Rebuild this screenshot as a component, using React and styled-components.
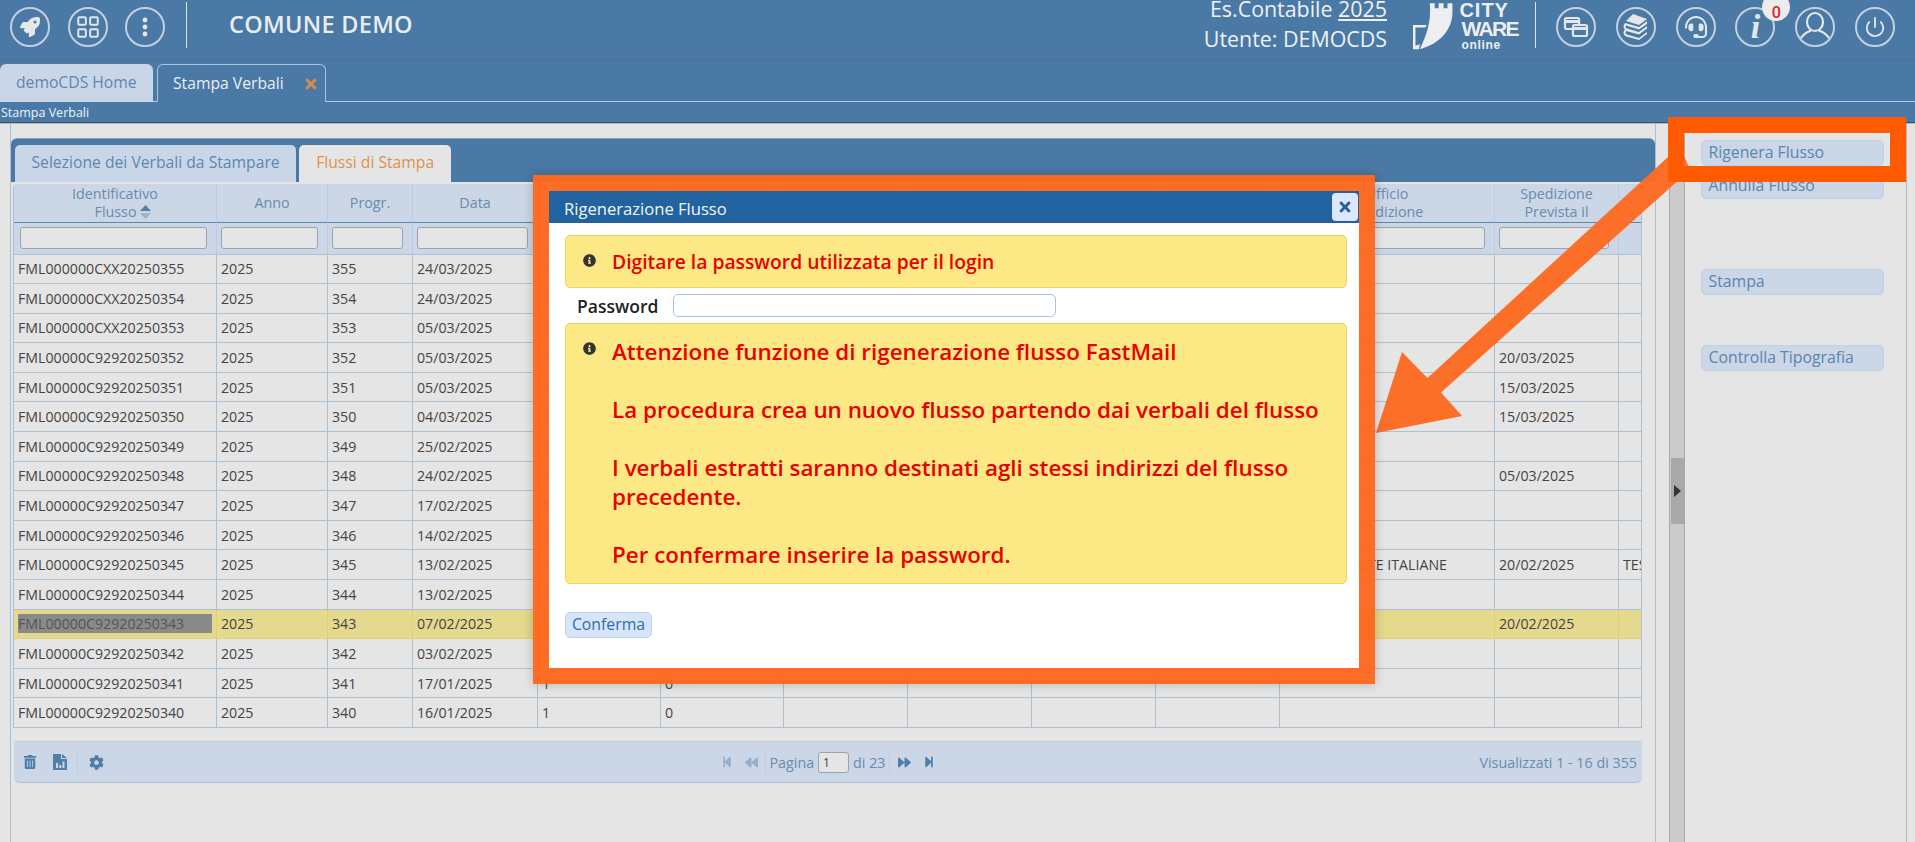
import React from "react";
import styled, { createGlobalStyle } from "styled-components";
import { FaRocket, FaHeadset, FaTrashAlt, FaCog, FaTimes, FaInfoCircle, FaStepBackward, FaBackward, FaForward, FaStepForward } from "react-icons/fa";
import { LayoutGrid, Power } from "lucide-react";

const Blue = "#4a79a5";

const GlobalStyle = createGlobalStyle`
  html, body { margin: 0; padding: 0; height: 100%; overflow: hidden; background: #e5e5e5; }
  body { font-family: "Open Sans", "Liberation Sans", sans-serif; }
  * { box-sizing: border-box; }
`;

const Page = styled.div`
  position: relative;
  width: 1915px;
  height: 842px;
  overflow: hidden;
  display: flex;
  flex-direction: column;
`;

/* top bar */
const Header = styled.div`
  height: 60px;
  background: ${Blue};
  border-bottom: 1px solid #44719b;
  display: flex;
  align-items: flex-start;
  justify-content: space-between;
  padding: 7px 20px 0 10px;
`;
const Group = styled.div`
  display: flex;
  align-items: flex-start;
`;
const Circles = styled.div`
  display: flex;
  gap: ${(p) => p.$gap}px;
  margin-left: ${(p) => p.$left || 0}px;
`;
const Circle = styled.div`
  position: relative;
  width: 40px;
  height: 40px;
  border-radius: 50%;
  border: 2px solid #c3d1de;
  color: #e4e8ec;
  display: flex;
  align-items: center;
  justify-content: center;
  overflow: ${(p) => (p.$clip ? "hidden" : "visible")};
`;
const Divider = styled.div`
  width: 1px;
  height: 46px;
  margin: -5px 0 0 ${(p) => p.$left}px;
  background: #e0e6ec;
`;
const Title = styled.div`
  margin: -1px 0 0 42px;
  font-size: 23.5px;
  line-height: 36px;
  font-weight: 600;
  letter-spacing: 0.3px;
  color: #e9edf0;
`;
const UserInfo = styled.div`
  margin-top: -7px;
  display: flex;
  flex-direction: column;
  gap: 12px;
  text-align: right;
  font-size: 21.4px;
  line-height: 18px;
  font-weight: 500;
  color: #eef1f4;
  u { text-underline-offset: 2px; }
`;
const Logo = styled.div`
  display: flex;
  margin: -5px 0 0 26px;
  width: 105px;
  color: #eceef0;
`;
const LogoWords = styled.div`
  margin-left: 5px;
  font-family: "Liberation Sans", sans-serif;
  font-weight: 700;
  text-align: left;
`;
const LogoCity = styled.div`
  font-size: 20px;
  line-height: 17px;
  letter-spacing: 1px;
`;
const LogoWare = styled.div`
  margin-left: 2px;
  font-size: 21px;
  line-height: 20px;
  letter-spacing: -1.6px;
`;
const LogoOnline = styled.div`
  margin-left: 2px;
  font-size: 12px;
  line-height: 12px;
  letter-spacing: 0.7px;
`;
const InfoGlyph = styled.span`
  font-family: "Liberation Serif", serif;
  font-style: italic;
  font-weight: 700;
  font-size: 34px;
  line-height: 34px;
`;
const Badge = styled.span`
  position: absolute;
  top: -16px;
  left: 25px;
  width: 28px;
  height: 28px;
  padding-top: 9px;
  border-radius: 50%;
  background: #ececec;
  color: #e0202a;
  font-size: 16px;
  font-weight: 600;
  display: flex;
  align-items: center;
  justify-content: center;
`;

/* application tabs */
const TabBar = styled.div`
  height: 42px;
  padding-top: 4px;
  background: ${Blue};
  border-bottom: 1px solid #b5cbdf;
  display: flex;
  gap: 4px;
`;
const AppTab = styled.div`
  height: 38px;
  width: ${(p) => p.$width}px;
  padding-left: ${(p) => p.$pad}px;
  border-radius: 6px 6px 0 0;
  font-size: 15.7px;
  line-height: 36px;
  display: flex;
  align-items: flex-start;
  background: ${(p) => (p.$active ? Blue : "#c9d6e8")};
  color: ${(p) => (p.$active ? "#e9eff5" : "#5d87ae")};
  border: ${(p) => (p.$active ? "1px solid #a9c7e0" : "none")};
  border-bottom: ${(p) => (p.$active ? `1px solid ${Blue}` : "none")};
`;
const TabClose = styled.span`
  margin: 2px 0 0 19px;
  color: #db8a4a;
  display: flex;
  height: 34px;
  align-items: center;
`;
const Crumb = styled.div`
  height: 21px;
  padding-left: 1px;
  background: ${Blue};
  border-bottom: 1px solid #33536f;
  box-shadow: 0 1px 0 #b9b9b9;
  color: #eef3f7;
  font-size: 12.5px;
  line-height: 21px;
`;

/* work area */
const Main = styled.div`
  flex: 1;
  display: flex;
  padding-left: 10px;
  min-height: 0;
`;
const LeftPanel = styled.div`
  width: 1646px;
  border-left: 1px solid #a9bed2;
  border-right: 1px solid #a9bed2;
  padding-top: 15px;
`;
const PanelTabs = styled.div`
  height: 44px;
  width: 1644px;
  padding: 6px 0 0 4px;
  background: ${Blue};
  border-top: 1px solid #7ca5c9;
  border-radius: 6px 6px 0 0;
  display: flex;
  gap: 3px;
`;
const PanelTab = styled.div`
  height: 37px;
  padding: 0 ${(p) => p.$pad}px;
  border-radius: 5px 5px 0 0;
  font-size: 15.7px;
  line-height: 35px;
  background: ${(p) => (p.$active ? "#e5e5e5" : "#c9d6e8")};
  color: ${(p) => (p.$active ? "#d9924e" : "#5d87ae")};
`;
const TableWrap = styled.div`
  margin: 2px 0 0 2px;
  width: 1629px;
  overflow: hidden;
  border-right: 1px solid #adc0d2;
  border-left: 1px solid #adc0d2;
  border-radius: 4px 0 0 0;
`;
const Table = styled.table`
  table-layout: fixed;
  width: 1729px;
  border-collapse: separate;
  border-spacing: 0;
`;
const Col = styled.col`
  width: ${(p) => p.$w}px;
`;
const HeadCell = styled.th`
  height: 39px;
  padding: 0 2px;
  background: #cbd6e7;
  border-right: 1px solid #bccde0;
  border-bottom: 1px solid #5d86ab;
  color: #6a8bab;
  font-size: 14.3px;
  line-height: 18px;
  font-weight: 400;
  text-align: center;
`;
const SortIcon = styled.svg`
  width: 11px;
  height: 14px;
  margin: 0 -16px 0 4px;
  vertical-align: -2px;
`;
const FilterCell = styled.td`
  height: 31.5px;
  padding: 0 9px 0 4px;
  background: #cbd6e7;
  border-right: 1px solid #bccde0;
  border-bottom: 1px solid #aec2d6;
  &:first-child { padding-left: 6px; }
`;
const FilterInput = styled.input`
  display: block;
  width: 100%;
  height: 22px;
  padding: 0 2px;
  background: #e5e5e5;
  border: 1px solid #98a4b0;
  border-radius: 3px;
`;
const Cell = styled.td`
  height: 29.6px;
  padding: 0 ${(p) => (p.$office ? 47 : 4)}px 0 4px;
  text-align: ${(p) => (p.$office ? "right" : "left")};
  background: ${(p) => (p.$selected ? "#e5d98e" : "#e5e5e5")};
  border-right: 1px solid ${(p) => (p.$selected ? "#e2d071" : "#adc0d2")};
  border-bottom: 1px solid ${(p) => (p.$selected ? "#e2d071" : "#adc0d2")};
  color: #444;
  font-size: 14.2px;
  line-height: 19px;
  white-space: nowrap;
  overflow: hidden;
`;
const Picked = styled.span`
  display: block;
  height: 19px;
  line-height: 19px;
  background: #8a8a8a;
  color: #555;
`;
const Pager = styled.div`
  position: relative;
  margin: 13px 0 0 3px;
  width: 1628px;
  height: 42px;
  background: #cbd6e7;
  border-top: 1px solid #c2cede;
  border-bottom: 1px solid #aec0d2;
  border-radius: 0 0 6px 6px;
  color: #5d87ae;
  display: grid;
  grid-template-columns: 1fr auto 1fr;
  align-items: center;
  font-size: 14.3px;
`;
const PagerLeft = styled.div`
  display: flex;
  align-items: center;
  padding-left: 9px;
`;
const PagerMid = styled.div`
  display: flex;
  align-items: center;
  color: #6a8bab;
`;
const PagerRight = styled.div`
  text-align: right;
  padding-right: 5px;
  color: #6a8bab;
`;
const ToolIcon = styled.span`
  display: flex;
  margin-right: ${(p) => p.$right || 0}px;
  color: ${(p) => (p.$off ? "#94afc9" : "#4f7ea8")};
`;
const ToolSep = styled.span`
  width: 1px;
  height: 24px;
  background: #bfcddf;
  margin: 0 ${(p) => p.$right}px 0 ${(p) => p.$left}px;
`;
const PageInput = styled.div`
  width: 31px;
  height: 21px;
  margin: 0 4px;
  padding-left: 4px;
  background: #e5e5e5;
  border: 1px solid #98a4b0;
  border-radius: 3px;
  color: #444;
  font-size: 12px;
  line-height: 20px;
`;
const Splitter = styled.div`
  width: 16px;
  margin-left: 13px;
  background: #cbcbcb;
  border-left: 1px solid #aaa;
  border-right: 1px solid #aaa;
  padding-top: 335px;
`;
const SplitHandle = styled.div`
  margin-left: 1px;
  width: 13px;
  height: 66px;
  background: #a9a9a9;
  display: flex;
  align-items: center;
  justify-content: center;
`;
const SplitArrow = styled.span`
  margin-top: -1px;
  border-left: 7px solid #333;
  border-top: 6px solid transparent;
  border-bottom: 6px solid transparent;
`;
const EastPanel = styled.div`
  width: 222px;
  padding: 17px 0 0 16px;
  border-right: 1px solid #b5b5b5;
`;
const SideButton = styled.div`
  width: 183px;
  height: 26px;
  margin-top: ${(p) => p.$top}px;
  padding-left: 6.5px;
  background: #cbd6e7;
  border: 1px solid #c2d0e2;
  border-radius: 5px;
  color: #5a85ac;
  font-size: 15.8px;
  line-height: 23px;
`;

/* dialog and the orange marks drawn on top of the screenshot */
const Modal = styled.div`
  position: absolute;
  left: 549px;
  top: 191px;
  width: 810px;
  height: 477px;
  background: #fff;
  display: flex;
  flex-direction: column;
`;
const ModalTitle = styled.div`
  height: 32px;
  padding-left: 15px;
  background: #22629f;
  color: #f2f6fa;
  font-size: 16.6px;
  font-weight: 500;
  line-height: 36px;
`;
const CloseButton = styled.div`
  position: absolute;
  right: 1px;
  top: 2px;
  width: 26px;
  height: 28px;
  border-radius: 4px;
  background: #dbe8fb;
  color: #2b6296;
  display: flex;
  align-items: center;
  justify-content: center;
`;
const ModalBody = styled.div`
  padding: 12px 12px 0 16px;
`;
const Alert = styled.div`
  display: flex;
  gap: 16px;
  padding: ${(p) => (p.$big ? "13px 14px 14px 17px" : "1px 14px 0 17px")};
  min-height: 53px;
  align-items: ${(p) => (p.$big ? "flex-start" : "center")};
  background: #fce985;
  border: 1px solid #ecd760;
  border-radius: 5px;
  color: #e80000;
  font-weight: 600;
  font-size: ${(p) => (p.$big ? 22.4 : 19.3)}px;
  line-height: ${(p) => (p.$big ? "29px" : "22px")};
`;
const AlertIcon = styled.span`
  flex: none;
  display: flex;
  color: #333;
  margin-top: ${(p) => (p.$big ? 5 : -3)}px;
`;
const PasswordRow = styled.div`
  display: flex;
  align-items: center;
  height: 23px;
  margin: 6px 0;
  padding-left: 12px;
`;
const PasswordLabel = styled.label`
  width: 96px;
  color: #222;
  font-size: 17.5px;
  font-weight: 600;
`;
const PasswordInput = styled.input`
  width: 383px;
  height: 23px;
  background: #fff;
  border: 1px solid #a9c3d9;
  border-radius: 5px;
`;
const Confirm = styled.div`
  display: inline-block;
  margin-top: 28px;
  width: 87px;
  height: 26px;
  text-align: center;
  background: #d7e5fb;
  border: 1px solid #bfd4ee;
  border-radius: 5px;
  color: #2f6ea6;
  font-size: 15.8px;
  line-height: 23px;
`;
const Frame = styled.div`
  position: absolute;
  left: ${(p) => p.$x}px;
  top: ${(p) => p.$y}px;
  width: ${(p) => p.$w}px;
  height: ${(p) => p.$h}px;
  border: ${(p) => p.$t}px solid ${(p) => p.$c};
  box-shadow: ${(p) => (p.$soft ? "0 0 10px rgba(0,0,0,.22)" : "none")};
  pointer-events: none;
`;
const ArrowLayer = styled.svg`
  position: absolute;
  left: 0;
  top: 0;
  width: 1915px;
  height: 842px;
  pointer-events: none;
`;

const colWidths = [203, 111, 85, 125, 123, 123, 124, 124, 124, 124, 215, 124, 124];

const rows = [
  ["FML000000CXX20250355", "355", "24/03/2025"],
  ["FML000000CXX20250354", "354", "24/03/2025"],
  ["FML000000CXX20250353", "353", "05/03/2025"],
  ["FML00000C92920250352", "352", "05/03/2025", "", "20/03/2025"],
  ["FML00000C92920250351", "351", "05/03/2025", "", "15/03/2025"],
  ["FML00000C92920250350", "350", "04/03/2025", "", "15/03/2025"],
  ["FML00000C92920250349", "349", "25/02/2025"],
  ["FML00000C92920250348", "348", "24/02/2025", "", "05/03/2025"],
  ["FML00000C92920250347", "347", "17/02/2025"],
  ["FML00000C92920250346", "346", "14/02/2025"],
  ["FML00000C92920250345", "345", "13/02/2025", "POSTE ITALIANE", "20/02/2025", "TEST"],
  ["FML00000C92920250344", "344", "13/02/2025"],
  ["FML00000C92920250343", "343", "07/02/2025", "", "20/02/2025"],
  ["FML00000C92920250342", "342", "03/02/2025"],
  ["FML00000C92920250341", "341", "17/01/2025"],
  ["FML00000C92920250340", "340", "16/01/2025"],
];

const WindowsIcon = () => (
  <svg width="26" height="24" viewBox="0 0 26 24" fill="none" stroke="currentColor" strokeWidth="2.2">
    <rect x="2" y="3" width="14" height="11" rx="1.5" />
    <path d="M2.5 6.5h13" strokeWidth="3" />
    <rect x="10" y="10" width="14" height="11" rx="1.5" fill="#4a79a5" />
    <path d="M10.5 13.5h13" strokeWidth="3" />
  </svg>
);

const BooksIcon = () => (
  <svg width="26" height="28" viewBox="0 0 26 28" fill="currentColor">
    <path d="M10 1 L24 6 L16 12 L3 8 Z" />
    <path d="M2 10 L16 14 L24 8 V11 L16 16.5 L3 12.5 C2 14 3 15 4 15.5 L16 19 L24 13 V15.5 L16 21.5 L3 18 C2 19.5 3 21 4 21.5 L16 25 L24 19 V21 L16 27 L3 23.5 C0 22 0 18 2 16.5 C0 15 0 12 2 10 Z" />
  </svg>
);

const UserIcon = () => (
  <svg width="36" height="36" viewBox="0 0 36 36" fill="none" stroke="currentColor" strokeWidth="2.2">
    <ellipse cx="18" cy="13" rx="8" ry="9" />
    <path d="M3 31 C6 24 12 22.5 14 21.5 M33 31 C30 24 24 22.5 22 21.5" />
  </svg>
);

const ChartFileIcon = () => (
  <svg width="14" height="16" viewBox="0 0 14 16" fill="currentColor">
    <path d="M0 0h8v5h6v11H0z M9 0l5 4H9z M3 9v5h2V9z M6.2 11v3h2v-3z M9.5 7.5V14h2V7.5z" fillRule="evenodd" />
  </svg>
);

const TowerLogo = () => (
  <svg width="42" height="48" viewBox="0 0 42 48" fill="currentColor">
    <path d="M17 1h5v5h4V1h5v5h4V1h5v9C40 28 27 42 7 47.5 13 35 19 20 17 1z" />
    <path d="M0 23h14l-1.5 2.5H2.5V44L7 42.5 6 47.5H0z" />
  </svg>
);

const App = () => {
  return (
    <Page>
      <GlobalStyle />
      <Header>
        <Group>
          <Circles $gap={17.5}>
            <Circle><FaRocket size={20} /></Circle>
            <Circle><LayoutGrid size={26} strokeWidth={1.8} /></Circle>
            <Circle>
              <svg width="6" height="20" viewBox="0 0 6 20" fill="currentColor">
                <circle cx="3" cy="3" r="2.4" /><circle cx="3" cy="10" r="2.4" /><circle cx="3" cy="17" r="2.4" />
              </svg>
            </Circle>
          </Circles>
          <Divider $left={21} />
          <Title>COMUNE DEMO</Title>
        </Group>
        <Group>
          <UserInfo>
            <div>Es.Contabile <u>2025</u></div>
            <div>Utente: DEMOCDS</div>
          </UserInfo>
          <Logo>
            <TowerLogo />
            <LogoWords>
              <LogoCity>CITY</LogoCity>
              <LogoWare>WARE</LogoWare>
              <LogoOnline>online</LogoOnline>
            </LogoWords>
          </Logo>
          <Divider $left={17} />
          <Circles $gap={19.8} $left={20}>
            <Circle><WindowsIcon /></Circle>
            <Circle><BooksIcon /></Circle>
            <Circle><FaHeadset size={22} /></Circle>
            <Circle>
              <InfoGlyph>i</InfoGlyph>
              <Badge>0</Badge>
            </Circle>
            <Circle $clip><UserIcon /></Circle>
            <Circle><Power size={22} strokeWidth={2} /></Circle>
          </Circles>
        </Group>
      </Header>

      <TabBar>
        <AppTab $width={153} $pad={16}>demoCDS Home</AppTab>
        <AppTab $active $width={169} $pad={15}>
          Stampa Verbali
          <TabClose><FaTimes size={16} /></TabClose>
        </AppTab>
      </TabBar>
      <Crumb>Stampa Verbali</Crumb>

      <Main>
        <LeftPanel>
          <PanelTabs>
            <PanelTab $pad={16.5}>Selezione dei Verbali da Stampare</PanelTab>
            <PanelTab $active $pad={17}>Flussi di Stampa</PanelTab>
          </PanelTabs>
          <TableWrap>
            <Table>
              <colgroup>
                {colWidths.map((w, i) => (
                  <Col key={i} $w={w} />
                ))}
              </colgroup>
              <thead>
                <tr>
                  <HeadCell>
                    Identificativo
                    <br />
                    Flusso
                    <SortIcon viewBox="0 0 11 14">
                      <path d="M5.5 0 11 6H0z" fill="#55809f" />
                      <path d="M5.5 14 11 8H0z" fill="#9db4cb" />
                    </SortIcon>
                  </HeadCell>
                  <HeadCell>Anno</HeadCell>
                  <HeadCell>Progr.</HeadCell>
                  <HeadCell>Data</HeadCell>
                  <HeadCell /><HeadCell /><HeadCell /><HeadCell /><HeadCell /><HeadCell />
                  <HeadCell>
                    Ufficio
                    <br />
                    Spedizione
                  </HeadCell>
                  <HeadCell>
                    Spedizione
                    <br />
                    Prevista il
                  </HeadCell>
                  <HeadCell />
                </tr>
                <tr>
                  {colWidths.map((w, i) => (
                    <FilterCell key={i}>{i < 12 && <FilterInput />}</FilterCell>
                  ))}
                </tr>
              </thead>
              <tbody>
                {rows.map((r) => {
                  const selected = r[1] === "343";
                  return (
                    <tr key={r[1]}>
                      <Cell $selected={selected}>{selected ? <Picked>{r[0]}</Picked> : r[0]}</Cell>
                      <Cell $selected={selected}>2025</Cell>
                      <Cell $selected={selected}>{r[1]}</Cell>
                      <Cell $selected={selected}>{r[2]}</Cell>
                      <Cell $selected={selected}>1</Cell>
                      <Cell $selected={selected}>0</Cell>
                      <Cell $selected={selected} /><Cell $selected={selected} /><Cell $selected={selected} /><Cell $selected={selected} />
                      <Cell $selected={selected} $office>{r[3]}</Cell>
                      <Cell $selected={selected}>{r[4]}</Cell>
                      <Cell $selected={selected}>{r[5]}</Cell>
                    </tr>
                  );
                })}
              </tbody>
            </Table>
          </TableWrap>
          <Pager>
            <PagerLeft>
              <ToolIcon $right={16}><FaTrashAlt size={14} /></ToolIcon>
              <ToolIcon><ChartFileIcon /></ToolIcon>
              <ToolSep $left={10} $right={11} />
              <ToolIcon><FaCog size={15} /></ToolIcon>
            </PagerLeft>
            <PagerMid>
              <ToolIcon $off $right={12}><FaStepBackward size={12} /></ToolIcon>
              <ToolIcon $off><FaBackward size={13} /></ToolIcon>
              <ToolSep $left={7} $right={3} />
              Pagina
              <PageInput>1</PageInput>
              di 23
              <ToolSep $left={3} $right={8} />
              <ToolIcon $right={12}><FaForward size={13} /></ToolIcon>
              <ToolIcon><FaStepForward size={12} /></ToolIcon>
            </PagerMid>
            <PagerRight>Visualizzati 1 - 16 di 355</PagerRight>
          </Pager>
        </LeftPanel>
        <Splitter>
          <SplitHandle><SplitArrow /></SplitHandle>
        </Splitter>
        <EastPanel>
          <SideButton $top={0}>Rigenera Flusso</SideButton>
          <SideButton $top={7}>Annulla Flusso</SideButton>
          <SideButton $top={70}>Stampa</SideButton>
          <SideButton $top={50}>Controlla Tipografia</SideButton>
        </EastPanel>
      </Main>

      <ArrowLayer viewBox="0 0 1915 842">
        <polygon
          points="1376,433 1402,352 1427.5,378 1668,157 1680,146 1690,170 1441,392.5 1462,416"
          fill="#fd6a20"
          fillOpacity="0.96"
        />
      </ArrowLayer>
      <Frame $soft $x={533} $y={175} $w={842} $h={509} $t={16} $c="rgba(253,104,30,.97)" />
      <Modal>
        <ModalTitle>Rigenerazione Flusso</ModalTitle>
        <CloseButton><FaTimes size={16} /></CloseButton>
        <ModalBody>
          <Alert>
            <AlertIcon><FaInfoCircle size={13} /></AlertIcon>
            Digitare la password utilizzata per il login
          </Alert>
          <PasswordRow>
            <PasswordLabel>Password</PasswordLabel>
            <PasswordInput />
          </PasswordRow>
          <Alert $big>
            <AlertIcon $big><FaInfoCircle size={13} /></AlertIcon>
            <div>
              Attenzione funzione di rigenerazione flusso FastMail
              <br /><br />
              La procedura crea un nuovo flusso partendo dai verbali del flusso
              <br /><br />
              I verbali estratti saranno destinati agli stessi indirizzi del flusso precedente.
              <br /><br />
              Per confermare inserire la password.
            </div>
          </Alert>
          <Confirm>Conferma</Confirm>
        </ModalBody>
      </Modal>
      <Frame $x={1668} $y={117} $w={238} $h={65} $t={16} $c="#ff5a00" />
    </Page>
  );
};

export default App;
